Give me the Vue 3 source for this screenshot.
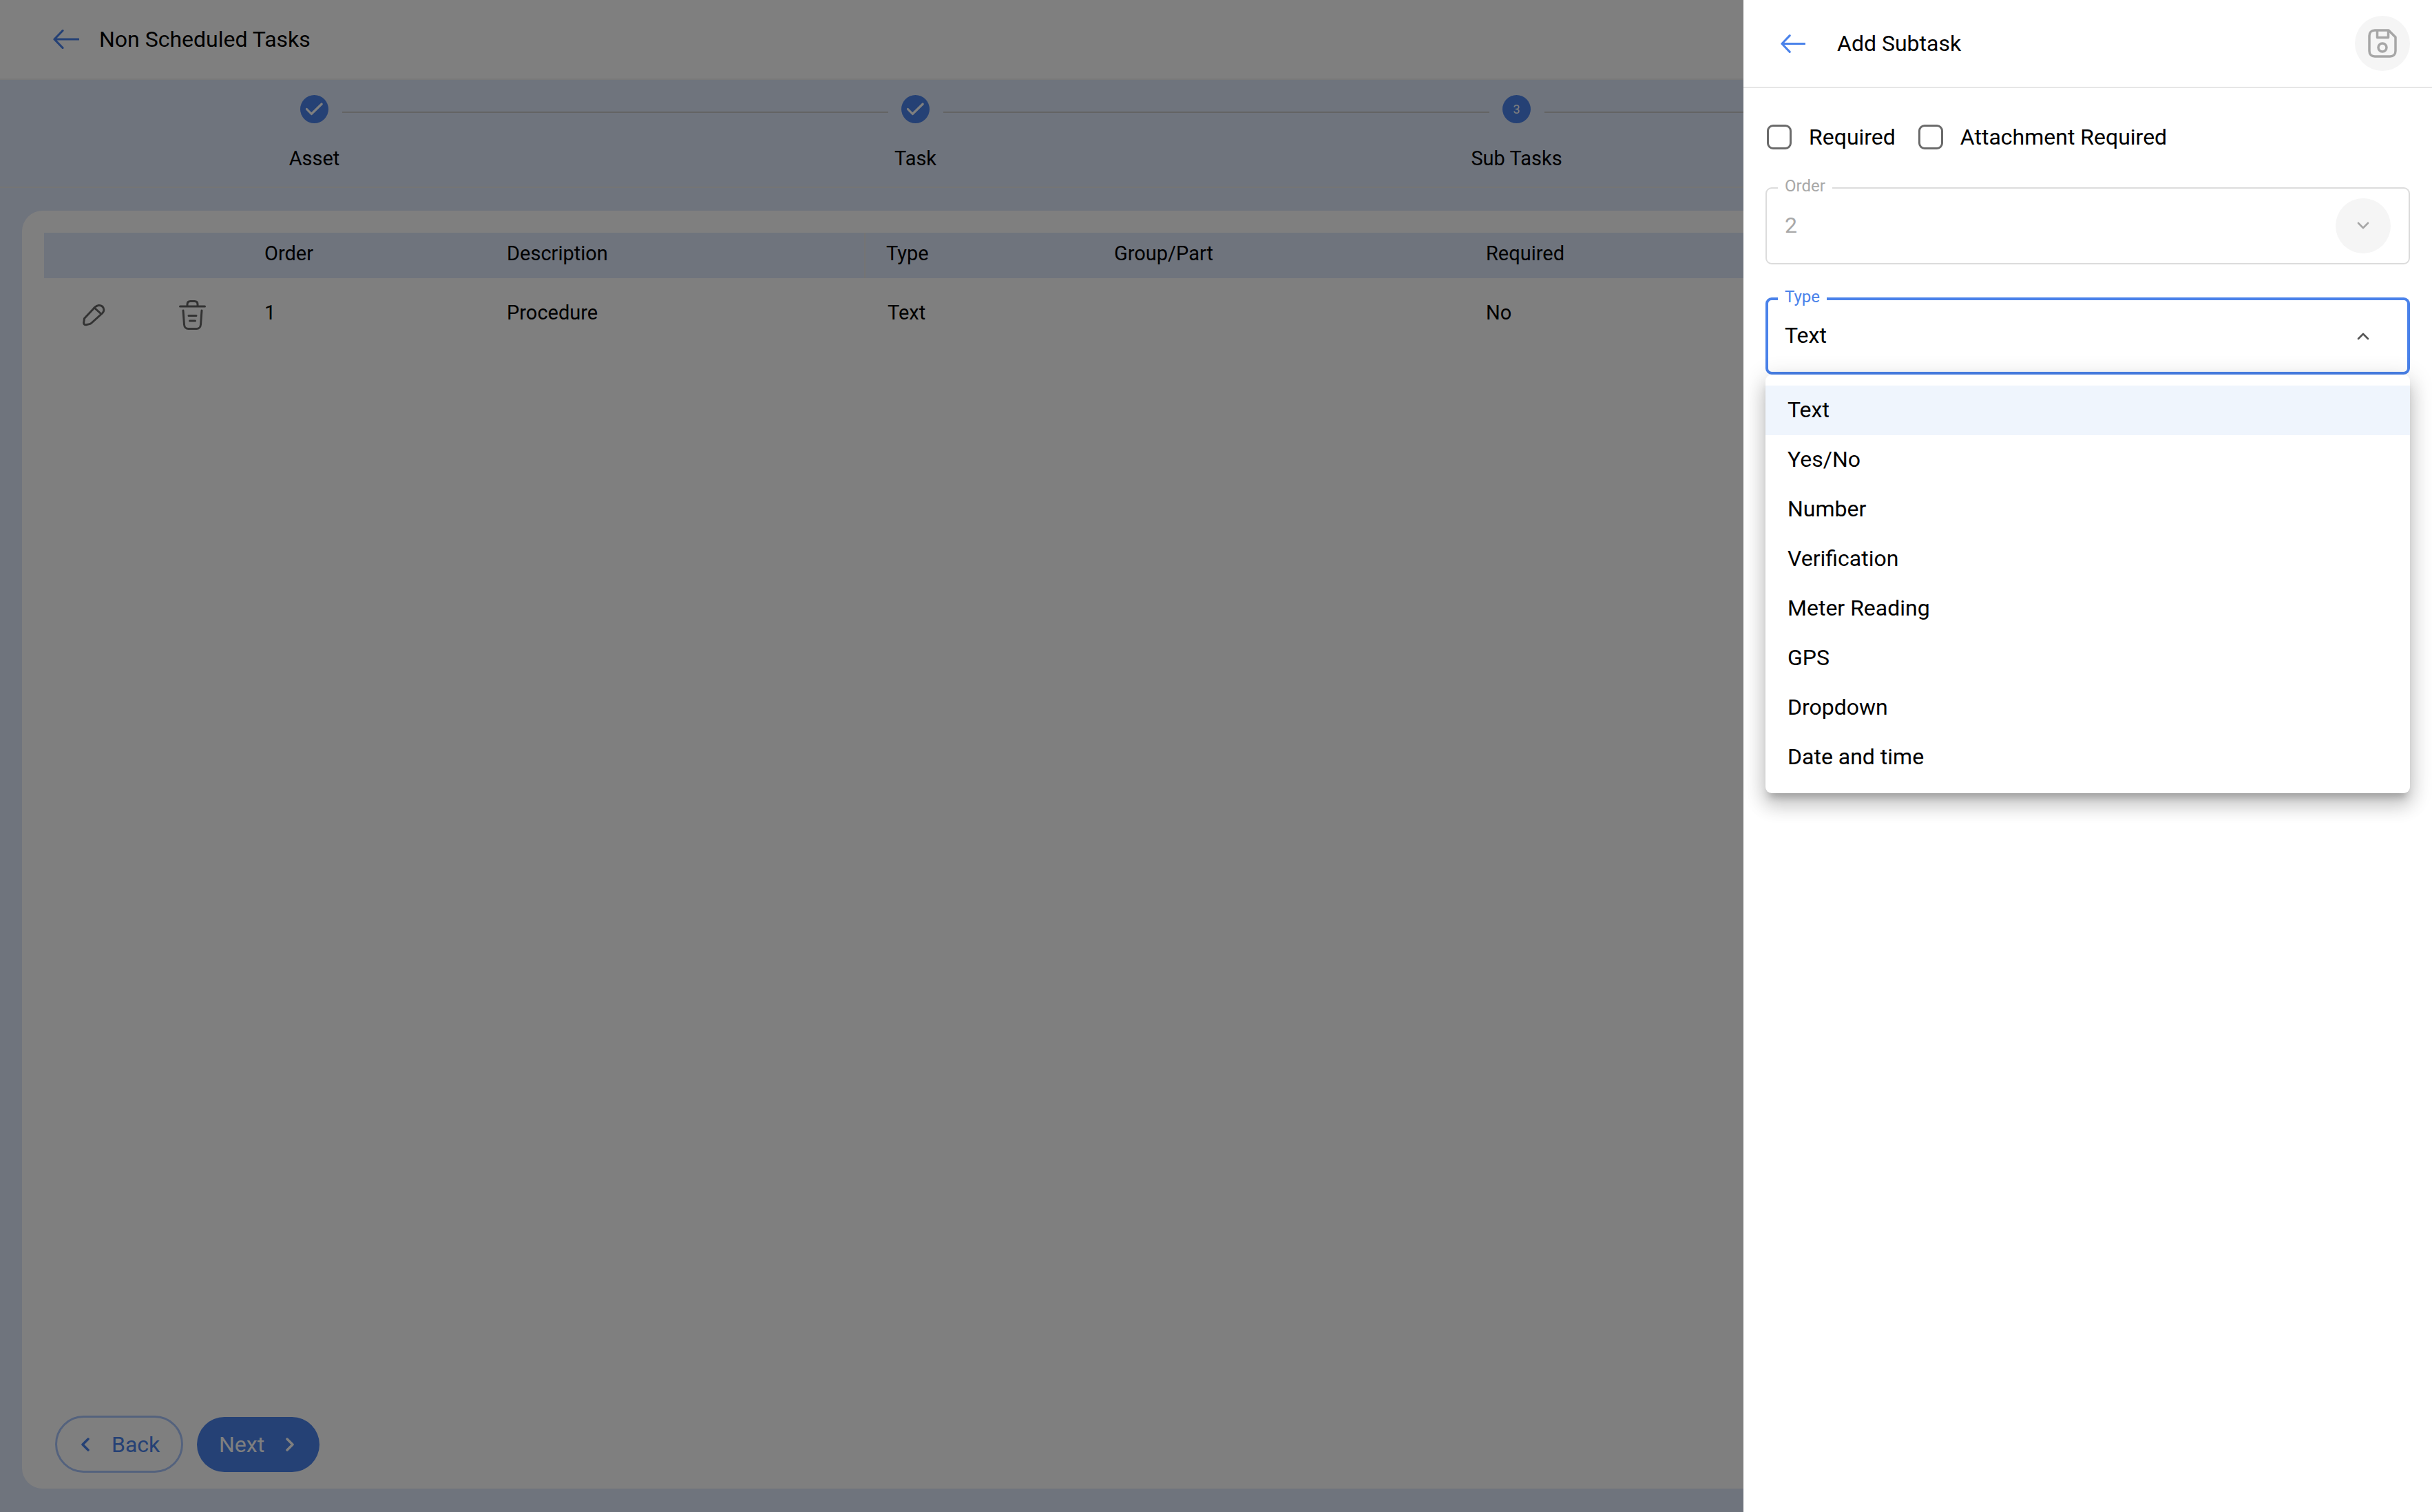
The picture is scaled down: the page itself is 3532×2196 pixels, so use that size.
<script setup>
import { ref } from 'vue'

const steps = [
  { label: 'Asset', done: true },
  { label: 'Task', done: true },
  { label: 'Sub Tasks', done: false, num: 3 },
  { label: '', done: false, num: 4 },
]

const columns = ['', '', 'Order', 'Description', 'Type', 'Group/Part', 'Required']
const row = { order: 1, description: 'Procedure', type: 'Text', group: '', required: 'No' }

const typeOptions = ['Text', 'Yes/No', 'Number', 'Verification', 'Meter Reading', 'GPS', 'Dropdown', 'Date and time']
const selectedType = ref('Text')
</script>

<template>
  <div class="page">
    <div class="main">
      <header class="top-bar">
        <svg class="arrow" viewBox="0 0 38 28" fill="none" stroke="#4a82ea" stroke-width="3.2" stroke-linecap="round" stroke-linejoin="round">
          <path d="M37 14H2M14 1.5 2 14l12 12.5" />
        </svg>
        <span class="title">Non Scheduled Tasks</span>
      </header>

      <section class="content">
        <div class="stepper">
          <div v-for="(step, i) in steps" :key="i" class="step">
            <div v-if="i > 0" class="connector"></div>
            <div class="dot">
              <svg v-if="step.done" width="41" height="41" viewBox="0 0 41 41" fill="none" stroke="#fff" stroke-width="3.2" stroke-linecap="round" stroke-linejoin="round">
                <path d="M9.500 20.500 16.300 27.500 31.200 13" />
              </svg>
              <span v-else>{{ step.num }}</span>
            </div>
            <div class="step-label">{{ step.label }}</div>
          </div>
        </div>

        <div class="card">
          <div class="table">
            <div class="thead">
              <div v-for="(col, i) in columns" :key="i" class="cell" :class="{ divided: col === 'Type' }">{{ col }}</div>
            </div>
            <div class="tbody">
              <div class="icon-cell">
                <svg class="pencil" viewBox="0 0 33 33" fill="none" stroke="#666" stroke-width="3" stroke-linecap="round" stroke-linejoin="round">
                  <path d="M2.5 21.5 18 5c3-3 7.500-3.500 10.500-1 3 2.500 3 7 .5 9.500L13 28c-1 1-2.500 1.600-4 1.900l-4 .8c-2 .4-3.500-1-3.400-3Z" />
                  <path d="M17 6l10 9" />
                </svg>
              </div>
              <div class="icon-cell">
                <svg class="trash" viewBox="0 0 39 43" fill="none" stroke="#666" stroke-width="3" stroke-linecap="round" stroke-linejoin="round">
                  <path d="M12 8V6c0-3 2-4.500 4.500-4.500h6C25 1.500 27 3 27 6v2" />
                  <path d="M1.500 9h36" />
                  <path d="M6 15l1.500 20.500c.3 4 3 6 6 6h12c3 0 5.700-2 6-6L33 15" />
                  <path d="M14 22.500h11M15.500 30h8" />
                </svg>
              </div>
              <div class="cell">{{ row.order }}</div>
              <div class="cell">{{ row.description }}</div>
              <div class="cell">{{ row.type }}</div>
              <div class="cell">{{ row.group }}</div>
              <div class="cell">{{ row.required }}</div>
            </div>
          </div>

          <div class="footer">
            <button class="btn btn-back">
              <svg width="12" height="20" viewBox="0 0 12 20" fill="none" stroke="#4a82ea" stroke-width="3.500" stroke-linecap="round" stroke-linejoin="round"><path d="M10 2 2 10l8 8" /></svg>
              Back
            </button>
            <button class="btn btn-next">
              Next
              <svg width="12" height="20" viewBox="0 0 12 20" fill="none" stroke="#fff" stroke-width="3.500" stroke-linecap="round" stroke-linejoin="round"><path d="m2 2 8 8-8 8" /></svg>
            </button>
          </div>
        </div>
      </section>
    </div>

    <div class="backdrop"></div>

    <aside class="drawer">
      <header class="drawer-head">
        <svg class="drawer-arrow" viewBox="0 0 38 28" fill="none" stroke="#4a82ea" stroke-width="3.2" stroke-linecap="round" stroke-linejoin="round">
          <path d="M37 14H2M14 1.500 2 14l12 12.500" />
        </svg>
        <span class="drawer-title">Add Subtask</span>
        <div class="save">
          <svg width="42" height="42" viewBox="0 0 42 42" fill="none" stroke="#a6a6a6" stroke-width="3.500" stroke-linejoin="round">
            <path d="M10 2h20l10 10v20c0 5-3 8-8 8H10c-5 0-8-3-8-8V10c0-5 3-8 8-8Z" />
            <path d="M13.500 2v10.500h16V2" />
            <circle cx="21" cy="27" r="6" />
          </svg>
        </div>
      </header>

      <div class="drawer-body">
        <div class="checks">
          <label class="check"><span class="box"></span>Required</label>
          <label class="check"><span class="box"></span>Attachment Required</label>
        </div>

        <div class="field disabled">
          <span class="legend">Order</span>
          <span class="value">2</span>
          <span class="chevron-btn filled">
            <svg width="18" height="12" viewBox="0 0 18 12" fill="none" stroke="#a6a6a6" stroke-width="2.600" stroke-linecap="round" stroke-linejoin="round"><path d="m2 2 7 7 7-7" /></svg>
          </span>
        </div>

        <div class="field focused">
          <span class="legend">Type</span>
          <span class="value">{{ selectedType }}</span>
          <span class="chevron-btn">
            <svg width="18" height="12" viewBox="0 0 18 12" fill="none" stroke="#555" stroke-width="2.600" stroke-linecap="round" stroke-linejoin="round"><path d="m2 10 7-7 7 7" /></svg>
          </span>

          <ul class="menu">
            <li v-for="opt in typeOptions" :key="opt" class="option" :class="{ active: opt === selectedType }">{{ opt }}</li>
          </ul>
        </div>
      </div>
    </aside>
  </div>
</template>

<style>
html, body { margin: 0; background: #fff; }
</style>

<style scoped>
.page {
  position: relative;
  height: 100vh;
  overflow: hidden;
  font-family: Roboto, "Liberation Sans", sans-serif;
  color: #000;
}
.main { height: 100%; display: flex; flex-direction: column; }

.top-bar {
  height: 114px;
  border-bottom: 2px solid #f2f2f2;
  display: flex;
  align-items: center;
  padding-left: 77px;
  background: #fff;
  flex-shrink: 0;
}
.arrow { width: 38px; height: 28px; margin-right: 29px; }
.title { font-size: 32px; }

.content {
  flex: 1;
  min-height: 0;
  background: #dfe8fa;
  display: flex;
  flex-direction: column;
}

.stepper {
  display: grid;
  grid-template-columns: repeat(4, 1fr);
  padding: 0 20px;
  height: 155px;
  border-bottom: 2px solid #eaeaea;
  flex-shrink: 0;
}
.step { position: relative; display: flex; flex-direction: column; align-items: center; padding-top: 22px; }
.connector {
  position: absolute;
  top: 46px;
  left: calc(-50% + 40px);
  right: calc(50% + 40px);
  height: 2px;
  background: #c8c8c8;
}
.dot {
  width: 41px;
  height: 41px;
  border-radius: 50%;
  background: #4a82ea;
  color: #fff;
  font-size: 18px;
  display: flex;
  align-items: center;
  justify-content: center;
}
.step-label { margin-top: 31px; font-size: 29px; line-height: 40px; }

.card {
  flex: 1;
  min-height: 0;
  margin: 33px 32px 34px;
  padding: 32px 32px 23px;
  background: #fff;
  border-radius: 30px;
  display: flex;
  flex-direction: column;
}
.table { flex: 1; min-height: 0; font-size: 29px; }
.thead, .tbody {
  display: grid;
  grid-template-columns: 144px 142px 352px 553px 329px 540px 1fr;
}
.thead { height: 66px; background: #dfe8fa; }
.thead .cell { padding-bottom: 6px; }
.tbody { height: 100px; }
.cell { display: flex; align-items: center; padding-left: 34px; }
.cell.divided { border-left: 2px solid #e9e9e9; padding-left: 30px; }
.icon-cell { display: flex; align-items: center; justify-content: center; padding-top: 7px; }
.pencil { width: 33px; height: 33px; }
.trash { width: 39px; height: 43px; }

.footer { display: flex; align-items: center; gap: 20px; padding-left: 16px; }
.btn {
  font-family: inherit;
  font-size: 32px;
  display: flex;
  align-items: center;
  border-radius: 44px;
  cursor: pointer;
}
.btn-back {
  height: 83px;
  width: 186px;
  padding: 0 0 0 35px;
  gap: 32px;
  background: #fff;
  color: #4a82ea;
  border: 3px solid #a8c4fa;
}
.btn-next {
  height: 80px;
  width: 178px;
  padding: 0 0 0 32px;
  gap: 31px;
  background: #4a82ea;
  color: #fff;
  border: none;
}

.backdrop { position: absolute; inset: 0; background: rgba(0, 0, 0, 0.5); }

.drawer {
  position: absolute;
  top: 0;
  right: 0;
  bottom: 0;
  width: 1000px;
  background: #fff;
}
.drawer-head {
  height: 126px;
  border-bottom: 2px solid #e6e6e6;
  display: flex;
  align-items: center;
  padding: 0 32px 0 54px;
}
.drawer-arrow { width: 36px; height: 27px; margin-right: 46px; }
.drawer-title { flex: 1; font-size: 32px; }
.save {
  width: 80px;
  height: 80px;
  border-radius: 50%;
  background: #f5f5f5;
  display: flex;
  align-items: center;
  justify-content: center;
}

.drawer-body { padding: 53px 32px 0; display: flex; flex-direction: column; gap: 48px; }
.checks { display: flex; gap: 33px; padding-left: 2px; margin-bottom: 7px; }
.check { display: flex; align-items: center; gap: 25px; font-size: 32px; height: 36px; }
.box {
  width: 36px;
  height: 36px;
  box-sizing: border-box;
  border: 3px solid #6b6b6b;
  border-radius: 9px;
}

.field {
  position: relative;
  height: 112px;
  box-sizing: border-box;
  border-radius: 9px;
  display: flex;
  align-items: center;
  justify-content: space-between;
  font-size: 32px;
}
.field.disabled { border: 2px solid #dcdcdc; padding: 0 26px; color: #a8a8a8; }
.field.focused { border: 4px solid #4a82ea; padding: 0 24px; }
.value { margin-bottom: 2px; }
.legend {
  position: absolute;
  top: -17px;
  left: 16px;
  padding: 0 10px;
  background: #fff;
  font-size: 24px;
  line-height: 26px;
}
.field.focused .legend { left: 14px; top: -18px; color: #4a82ea; }
.chevron-btn {
  width: 80px;
  height: 80px;
  border-radius: 50%;
  display: flex;
  align-items: center;
  justify-content: center;
}
.chevron-btn.filled { background: #f5f5f5; }

.menu {
  position: absolute;
  top: 108px;
  left: -4px;
  right: -4px;
  z-index: 3;
  margin: 0;
  padding: 16px 0;
  list-style: none;
  background: #fff;
  border-radius: 9px;
  box-shadow: 0 11px 11px -5px rgba(0, 0, 0, 0.2), 0 18px 27px 2px rgba(0, 0, 0, 0.14), 0 7px 32px 6px rgba(0, 0, 0, 0.12);
}
.option { height: 72px; box-sizing: border-box; display: flex; align-items: center; padding: 0 0 2px 32px; }
.option.active { background: #eff5fd; }
</style>
